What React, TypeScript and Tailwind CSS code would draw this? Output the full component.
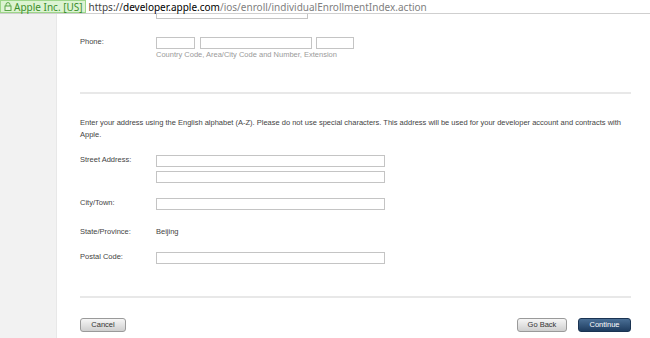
const label = 'w-[76px] shrink-0 leading-[10px] text-[#444]';
const box = 'h-[12px] border border-[#c4c4c4] bg-white';

function Field({ name, children }: { name: string; children: React.ReactNode }) {
  return (
    <div className="flex">
      <div className={label}>{name}</div>
      <div>{children}</div>
    </div>
  );
}

export default function App() {
  return (
    <div className="w-[650px] h-[338px] overflow-hidden bg-white font-['Liberation_Sans',Arial,sans-serif] text-[7.5px]">
      {/* browser address bar */}
      <div className="h-[14px] flex items-stretch border-b border-[#cfcfcf] bg-white">
        <div className="flex items-center gap-[2px] pl-[3px] pr-[2px] bg-[#dcf3d2] border border-[#9dd68a] text-[#3b8f2c] font-['Noto_Sans',sans-serif] text-[10px] leading-none">
          <svg width="8" height="9" viewBox="0 0 8 9" fill="none" stroke="#5aa548" strokeWidth="1">
            <path d="M2 4V2.6a2 2 0 0 1 4 0V4" />
            <rect x="1" y="4" width="6" height="4.5" fill="#e9f7e2" />
          </svg>
          <span>Apple Inc. [US]</span>
        </div>
        <div className="flex items-center pl-[3px] font-['Noto_Sans',sans-serif] text-[10px] leading-none">
          <span className="text-[#444]">https://</span>
          <span className="text-black">developer.apple.com</span>
          <span className="text-[#808080]">/ios/enroll/individualEnrollmentIndex.action</span>
        </div>
      </div>

      <div className="flex h-[324px]">
        <div className="w-[57px] shrink-0 bg-[#f2f2f2] border-r border-[#e8e8e8]" />
        <div className="flex-1 pl-[23px] pr-[19px]">
          {/* bottom of the field above, scrolled out of view */}
          <div className="ml-[76px] w-[152px] h-[5px] border-x border-b border-[#c4c4c4]" />

          <div className="mt-[18px]">
            <Field name="Phone:">
              <div className="flex">
                <div className={`${box} w-[39px]`} />
                <div className={`${box} w-[112px] ml-[5px]`} />
                <div className={`${box} w-[38px] ml-[4px]`} />
              </div>
              <div className="mt-[1px] leading-[10px] text-[#9a9a9a]">
                Country Code, Area/City Code and Number, Extension
              </div>
            </Field>
          </div>

          <div className="mt-[32px] h-[2px] bg-[#e8e8e8]" />

          <p className="mt-[23px] leading-[12px] text-[#444] pr-[8px]">
            Enter your address using the English alphabet (A-Z). Please do not use special characters. This address will be used for your developer account and contracts with Apple.
          </p>

          <div className="mt-[14px]">
            <Field name="Street Address:">
              <div className={`${box} w-[229px]`} />
              <div className={`${box} w-[229px] mt-[4px]`} />
            </Field>
          </div>

          <div className="mt-[15px]">
            <Field name="City/Town:">
              <div className={`${box} w-[229px]`} />
            </Field>
          </div>

          <div className="mt-[17px]">
            <Field name="State/Province:">
              <div className="leading-[10px] text-[#444]">Beijing</div>
            </Field>
          </div>

          <div className="mt-[15px]">
            <Field name="Postal Code:">
              <div className={`${box} w-[229px]`} />
            </Field>
          </div>

          <div className="mt-[32px] h-[2px] bg-[#e8e8e8]" />

          <div className="mt-[20px] flex items-center">
            <button className="w-[46px] h-[14px] rounded-[3px] border border-[#9a9a9a] bg-gradient-to-b from-[#f6f6f6] to-[#cfcfcf] text-[#333] leading-none">
              Cancel
            </button>
            <div className="flex-1" />
            <button className="w-[50px] h-[14px] rounded-[3px] border border-[#9a9a9a] bg-gradient-to-b from-[#f6f6f6] to-[#cfcfcf] text-[#333] leading-none">
              Go Back
            </button>
            <button className="ml-[11px] w-[53px] h-[14px] rounded-[3px] border border-[#1a3352] bg-gradient-to-b from-[#4a6f95] to-[#1f3d60] text-white leading-none">
              Continue
            </button>
          </div>
        </div>
      </div>
    </div>
  );
}
